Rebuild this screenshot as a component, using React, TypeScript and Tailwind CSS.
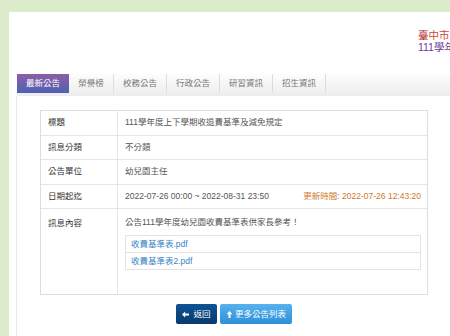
import React from "react"

const tabs = ["最新公告", "榮譽榜", "校務公告", "行政公告", "研習資訊", "招生資訊"]

const rows: { label: string; value: React.ReactNode; extra?: string }[] = [
  { label: "標題", value: "111學年度上下學期收退費基準及減免規定" },
  { label: "訊息分類", value: "不分類" },
  { label: "公告單位", value: "幼兒園主任" },
  {
    label: "日期起迄",
    value: "2022-07-26 00:00 ~ 2022-08-31 23:50",
    extra: "更新時間: 2022-07-26 12:43:20",
  },
]

function ArrowIcon({ dir }: { dir: "left" | "up" }) {
  return (
    <svg width="7" height="7" viewBox="0 0 10 10" className={dir === "up" ? "rotate-90" : ""}>
      <path d="M0 5 L4.5 0.8 L4.5 3.6 L10 3.6 L10 6.4 L4.5 6.4 L4.5 9.2 Z" fill="currentColor" />
    </svg>
  )
}

export default function App() {
  return (
    <div
      className="h-[336px] w-[450px] overflow-hidden bg-[#dcebc9] pt-[12px] pl-[9px]"
      style={{ fontFamily: '"Liberation Sans", "Noto Sans CJK TC", sans-serif' }}
    >
      <div className="h-[400px] w-[600px] bg-white">
        {/* Header */}
        <div className="h-[62px] pt-[17px] pl-[409px] whitespace-nowrap text-[10.5px] leading-[12px]">
          <div className="text-[#cc4b3c]">
            <span className="text-[#b3261e]">臺</span>中市立大里國民小學附設幼兒園
          </div>
          <div className="text-[#6b3b98]">111學年度</div>
        </div>

        {/* Tabs */}
        <div className="ml-[8px] flex h-[22px] bg-gradient-to-b from-[#fdfdfd] to-[#ececec]">
          {tabs.map((t, i) =>
            i === 0 ? (
              <div
                key={t}
                className="flex h-[19px] w-[52px] items-center justify-center bg-gradient-to-b from-[#8c5ca6] to-[#4c61b2] text-[8.5px] text-white"
              >
                {t}
              </div>
            ) : (
              <div
                key={t}
                className={`flex h-[19px] items-center justify-center border-r border-[#dcdcdc] text-[8.5px] text-[#777] ${
                  i === 1 ? "w-[45px]" : "w-[53px]"
                }`}
              >
                {t}
              </div>
            )
          )}
        </div>

        {/* Content */}
        <div className="ml-[7px] h-[300px] border-l border-[#e4ecdf] pt-[14px] pl-[23px]">
          <div className="w-[388px] border border-[#dedede] text-[8.5px]">
            {rows.map((r) => (
              <div key={r.label} className="flex h-[24.5px] border-b border-[#e6e6e6]">
                <div className="flex w-[77px] items-center border-r border-[#e6e6e6] pl-[7px] text-[#333]">
                  {r.label}
                </div>
                <div className="flex flex-1 items-center justify-between pl-[7px] pr-[6px] text-[#555]">
                  <span>{r.value}</span>
                  {r.extra && <span className="text-[#d0782e]">{r.extra}</span>}
                </div>
              </div>
            ))}
            <div className="flex h-[85px]">
              <div className="w-[77px] border-r border-[#e6e6e6] pt-[8px] pl-[7px] text-[#333]">訊息內容</div>
              <div className="flex-1 pt-[8px] pl-[7px] pr-[6px] text-[#555]">
                <div className="leading-[10px]">公告111學年度幼兒園收費基準表供家長參考！</div>
                <div className="mt-[8px] border border-[#e3e3e3] text-[#3a84c4]">
                  <div className="flex h-[17px] items-center border-b border-[#e3e3e3] pl-[5px]">收費基準表.pdf</div>
                  <div className="flex h-[16px] items-center pl-[5px]">收費基準表2.pdf</div>
                </div>
              </div>
            </div>
          </div>

          <div className="mt-[9px] flex w-[388px] justify-center gap-[3px] text-[8.5px] text-white">
            <div className="flex h-[20px] w-[41px] items-center justify-center gap-[4px] rounded-[2px] bg-gradient-to-b from-[#0e5394] to-[#083a6c]">
              <ArrowIcon dir="left" />
              返回
            </div>
            <div className="flex h-[20px] w-[72px] items-center justify-center gap-[2px] rounded-[2px] bg-gradient-to-b from-[#56b2ee] to-[#2e8fd9]">
              <ArrowIcon dir="up" />
              更多公告列表
            </div>
          </div>
        </div>
      </div>
    </div>
  )
}
